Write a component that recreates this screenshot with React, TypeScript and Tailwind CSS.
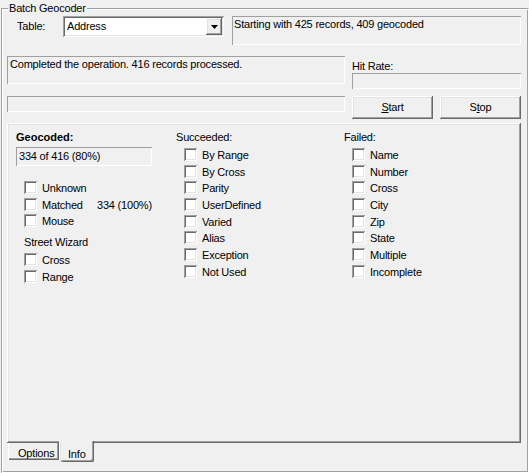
import React from "react";

const RAISED =
  "shadow-[inset_-1px_-1px_0_#696969,inset_1px_1px_0_#ffffff,inset_-2px_-2px_0_#a0a0a0,inset_2px_2px_0_#e3e3e3]";
const SUNKEN2 =
  "shadow-[inset_1px_1px_0_#a0a0a0,inset_-1px_-1px_0_#ffffff,inset_2px_2px_0_#696969,inset_-2px_-2px_0_#e3e3e3]";
const SUNKEN1 = "shadow-[inset_1px_1px_0_#a0a0a0,inset_-1px_-1px_0_#ffffff]";

function Check({ label, extra }: { label: string; extra?: string }) {
  return (
    <div className="flex items-start h-[16.67px]">
      <span className={`w-[13px] h-[13px] bg-white shrink-0 ${SUNKEN2}`} />
      {extra ? (
        <>
          <span className="ml-[5px] mt-[1px] w-[55px]">{label}</span>
          <span className="mt-[1px]">{extra}</span>
        </>
      ) : (
        <span className="ml-[5px] mt-[1px]">{label}</span>
      )}
    </div>
  );
}

export default function App() {
  return (
    <div className="w-[529px] h-[473px] bg-[#f0f0f0] overflow-hidden text-black font-['Liberation_Sans',Arial,sans-serif] text-[11px] leading-[13px] tracking-[-0.2px] pt-[8px]">
      <div className="relative ml-[1px] w-[528px] h-[465px] border border-[#a0a0a0] border-r-white border-b-white shadow-[inset_1px_1px_0_#ffffff,inset_-1px_-1px_0_#a0a0a0]">
        <span className="absolute -top-[7px] left-[6px] bg-[#f0f0f0] px-[1px]">Batch Geocoder</span>
        <div className="pl-[5px] pt-[6px]">
          {/* Row 1 */}
          <div className="flex h-[30px]">
            <span className="ml-[10px] mt-[5px] w-[46px]">Table:</span>
            <div className={`mt-[1px] w-[161px] h-[21px] bg-white flex items-center ${SUNKEN2}`}>
              <span className="pl-[4px] flex-1">Address</span>
              <div className={`w-[16px] h-[17px] mr-[2px] bg-[#f0f0f0] flex items-center justify-center ${RAISED}`}>
                <svg width="7" height="4" viewBox="0 0 7 4">
                  <path d="M0 0H7L3.5 4Z" fill="#000" />
                </svg>
              </div>
            </div>
            <div className={`ml-[8px] mt-[1px] w-[289px] h-[29px] pl-[2px] pt-[2px] ${SUNKEN1}`}>
              Starting with 425 records, 409 geocoded
            </div>
          </div>
          {/* Row 2 */}
          <div className="flex mt-[11px]">
            <div className={`w-[338px] h-[28px] pl-[3px] pt-[2px] ${SUNKEN1}`}>
              Completed the operation. 416 records processed.
            </div>
            <div className="ml-[7px] flex flex-col">
              <span className="mt-[4px] h-[13px]">Hit Rate:</span>
              <div className={`w-[169px] h-[16px] ${SUNKEN1}`} />
            </div>
          </div>
          {/* Row 3 */}
          <div className="flex mt-[7px]">
            <div className={`w-[338px] h-[16px] ${SUNKEN1}`} />
            <div className={`ml-[7px] w-[81px] h-[23px] flex items-center justify-center ${RAISED}`}>
              <span>
                <span className="underline">S</span>tart
              </span>
            </div>
            <div className={`ml-[7px] w-[81px] h-[23px] flex items-center justify-center ${RAISED}`}>
              <span>
                S<span className="underline">t</span>op
              </span>
            </div>
          </div>
          {/* Tab panel */}
          <div className={`mt-[4px] w-[514px] h-[320px] flex pl-[9px] pt-[8px] ${RAISED}`}>
            <div className="w-[160px] flex flex-col">
              <span className="font-bold tracking-normal h-[13px]">Geocoded:</span>
              <div className={`mt-[3px] w-[136px] h-[19px] flex items-center pl-[3px] ${SUNKEN1}`}>
                334 of 416 (80%)
              </div>
              <div className="mt-[15px] ml-[8px]">
                <Check label="Unknown" />
                <Check label="Matched" extra="334 (100%)" />
                <Check label="Mouse" />
              </div>
              <span className="mt-[5.5px] ml-[8px] h-[13px]">Street Wizard</span>
              <div className="mt-[3.5px] ml-[8px]">
                <Check label="Cross" />
                <Check label="Range" />
              </div>
            </div>
            <div className="w-[168px] flex flex-col">
              <span className="h-[13px]">Succeeded:</span>
              <div className="mt-[4px] ml-[8px]">
                {["By Range", "By Cross", "Parity", "UserDefined", "Varied", "Alias", "Exception", "Not Used"].map(
                  (l) => (
                    <Check key={l} label={l} />
                  )
                )}
              </div>
            </div>
            <div className="flex flex-col">
              <span className="h-[13px]">Failed:</span>
              <div className="mt-[4px] ml-[8px]">
                {["Name", "Number", "Cross", "City", "Zip", "State", "Multiple", "Incomplete"].map((l) => (
                  <Check key={l} label={l} />
                ))}
              </div>
            </div>
          </div>
          {/* Tabs */}
          <div className="flex ml-[1px]">
            <div className="w-[51px] h-[17px] pl-[10px] pt-[4px] shadow-[inset_1px_0_0_#ffffff,inset_-1px_-1px_0_#696969,inset_-2px_-2px_0_#a0a0a0]">
              Options
            </div>
            <div className="-mt-[2px] w-[35px] h-[21px] bg-[#f0f0f0] pl-[9px] pt-[7px] rounded-b-[2px] shadow-[inset_1px_0_0_#ffffff,inset_2px_0_0_#e3e3e3,inset_-1px_-1px_0_#696969,inset_-2px_-2px_0_#a0a0a0]">
              Info
            </div>
          </div>
        </div>
      </div>
    </div>
  );
}
